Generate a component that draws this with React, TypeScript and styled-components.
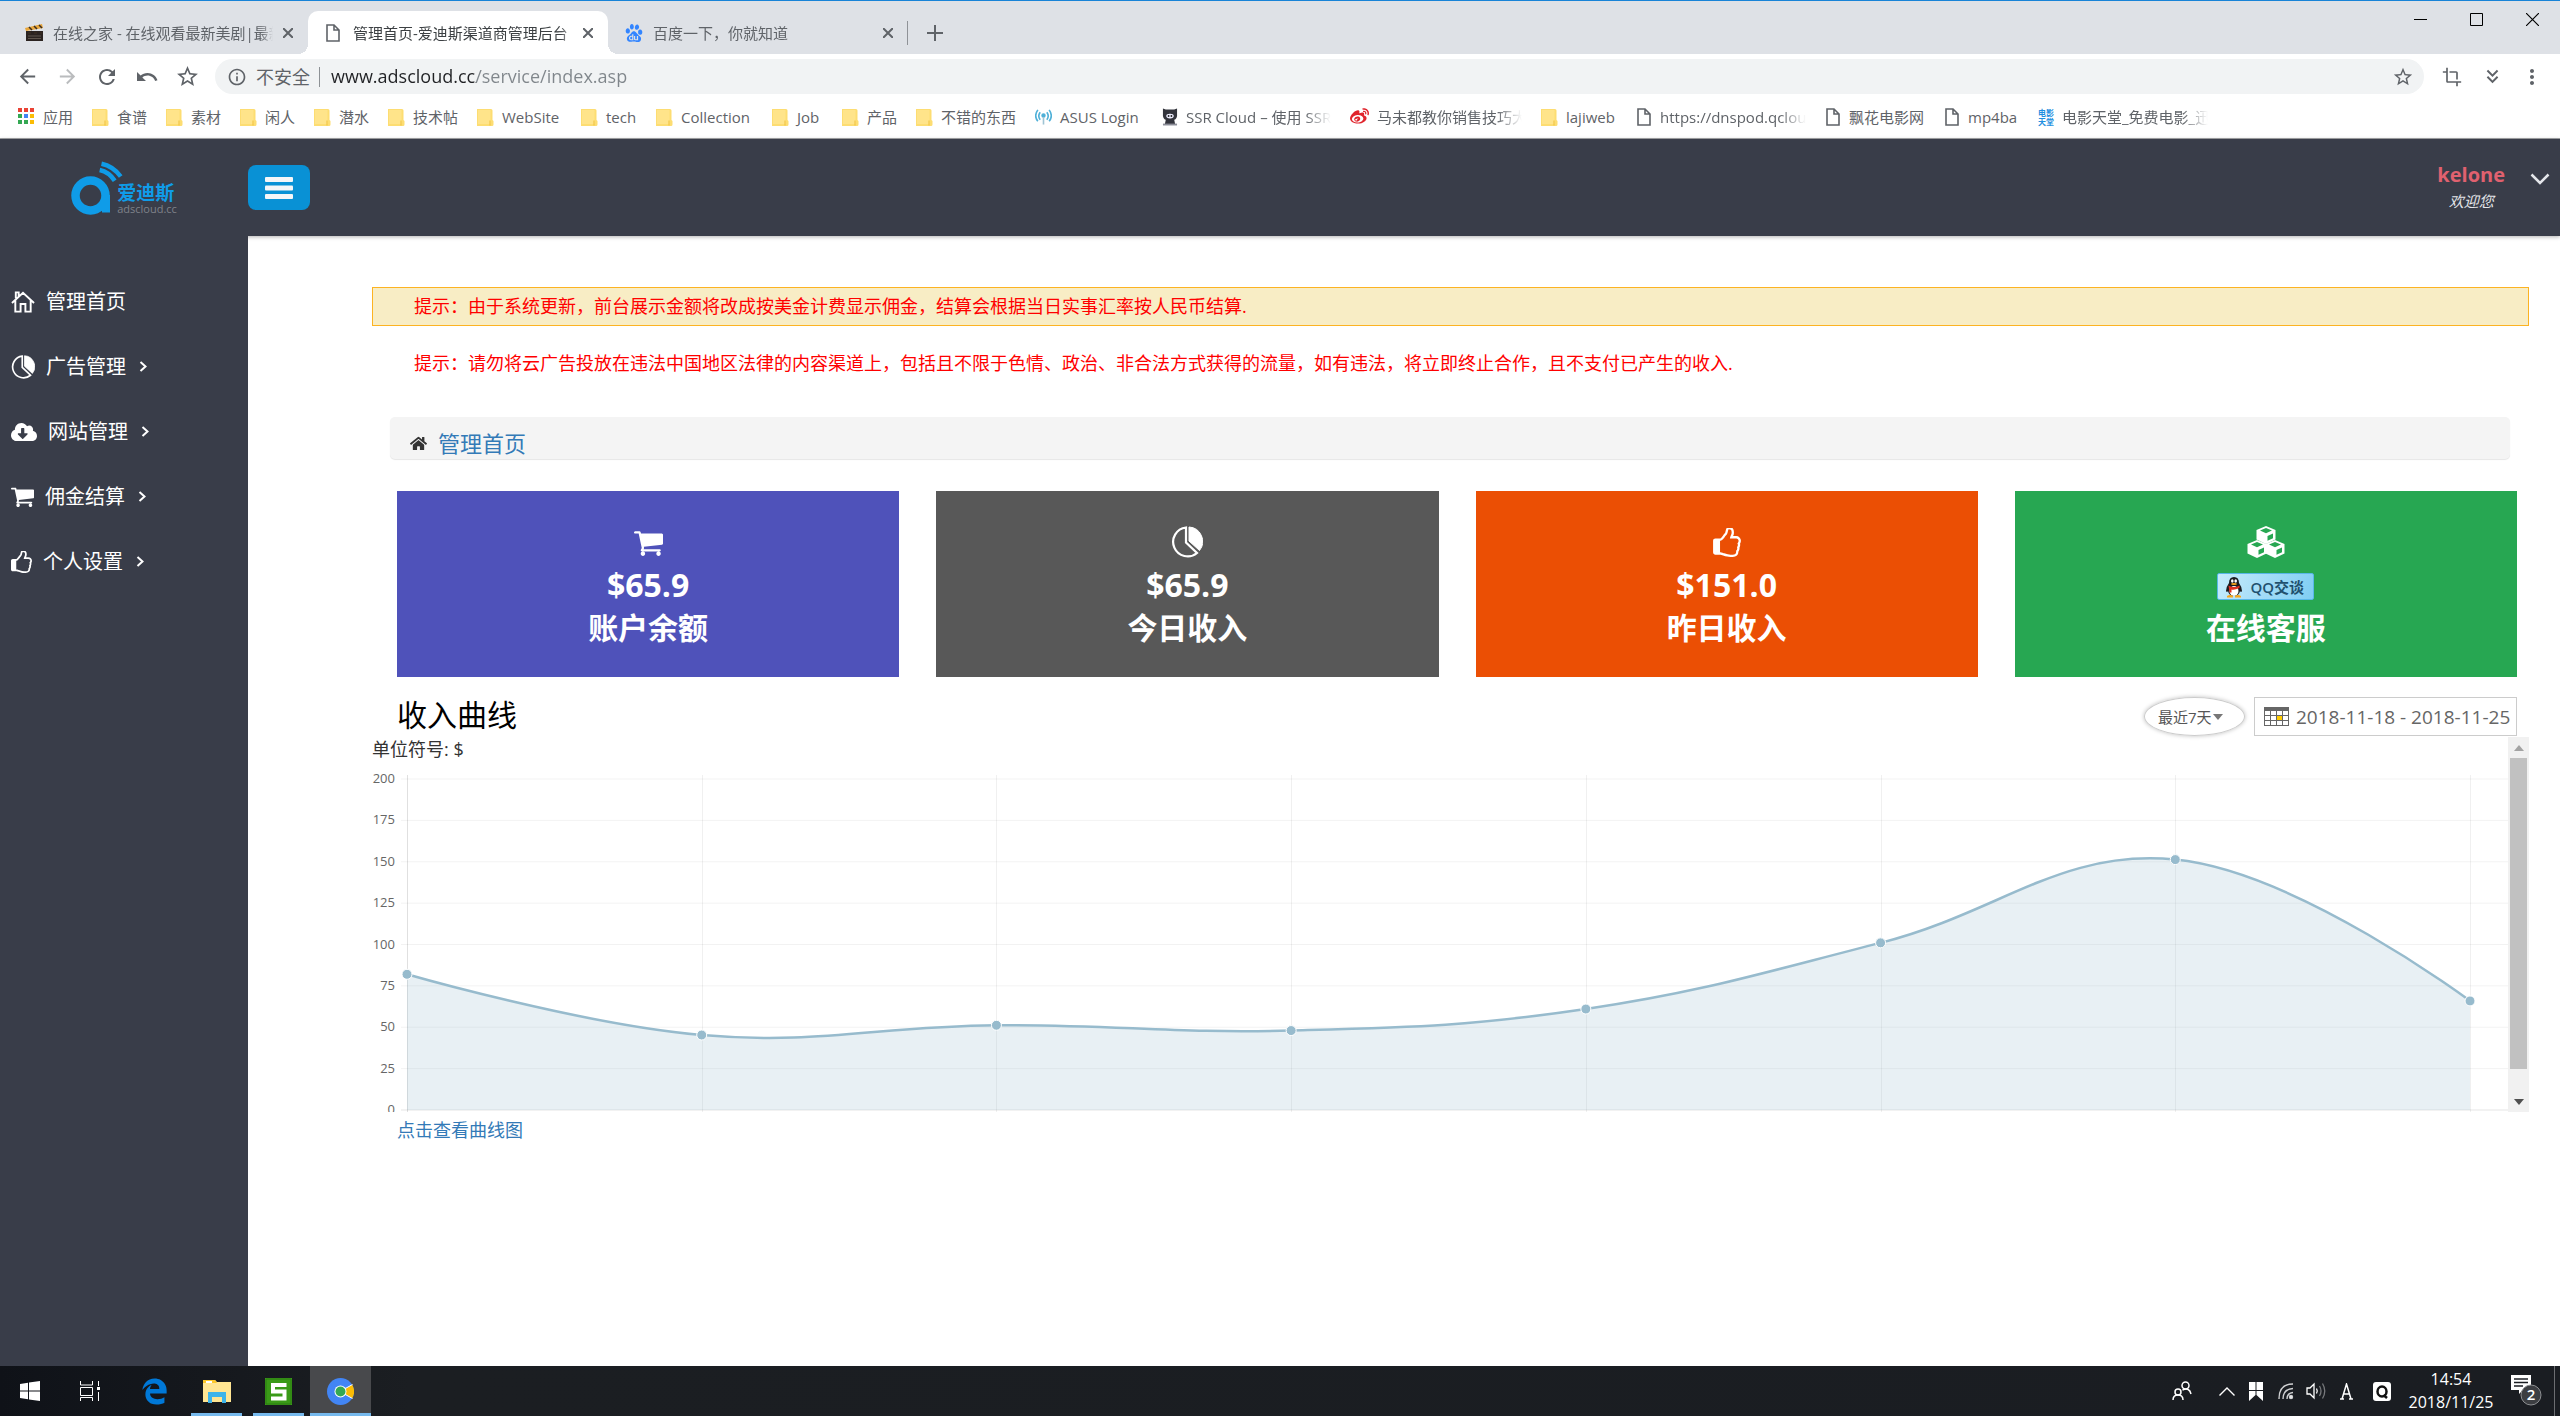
import React, { useLayoutEffect, useRef, useState } from 'react';
import styled, { createGlobalStyle, css } from 'styled-components';
import {
  MdArrowBack,
  MdArrowForward,
  MdRefresh,
  MdUndo,
  MdStarBorder,
  MdInfoOutline,
  MdCrop,
  MdMoreVert,
  MdKeyboardDoubleArrowDown,
} from 'react-icons/md';
import { FaCloudDownloadAlt, FaHome, FaWeibo, FaEdgeLegacy } from 'react-icons/fa';
import { SiBaidu } from 'react-icons/si';

const ink = '#393d49';
const link = '#337ab7';

const GlobalStyle = createGlobalStyle`
  *, *::before, *::after { box-sizing: border-box; }
  body {
    margin: 0;
    background: #fff;
    color: #333;
    font-family: "Open Sans", "Noto Sans CJK SC", sans-serif;
    font-size: 18px;
  }
  button, input, select { font-family: inherit; color: inherit; }
  button { border: 0; background: none; padding: 0; cursor: pointer; }
  a { color: inherit; text-decoration: none; }
  svg { display: block; flex: none; }
  h1, h2, p, ul { margin: 0; padding: 0; font-weight: normal; }
  ul { list-style: none; }
`;

const Screen = styled.div`
  display: flex;
  flex-direction: column;
  min-height: 100vh;
`;

/* ---------- browser frame ---------- */

const TabStrip = styled.div`
  display: flex;
  align-items: flex-end;
  height: 54px;
  padding-left: 8px;
  border-top: 1px solid #1883d7;
  background: #dee1e6;
`;

const Tab = styled.div<{ $active?: boolean; $rule?: boolean }>`
  position: relative;
  display: flex;
  align-items: center;
  width: 300px;
  height: 43px;
  padding: 0 10px 0 17px;
  border-radius: 10px 10px 0 0;
  color: ${(p) => (p.$active ? '#3c4043' : '#5f6368')};
  ${(p) =>
    p.$active &&
    css`
      background: #fff;
      &::before,
      &::after {
        content: '';
        position: absolute;
        bottom: 0;
        width: 10px;
        height: 10px;
      }
      &::before {
        left: -10px;
        background: radial-gradient(circle at 0 0, transparent 10px, #fff 10px);
      }
      &::after {
        right: -10px;
        background: radial-gradient(circle at 100% 0, transparent 10px, #fff 10px);
      }
    `}
  ${(p) =>
    p.$rule &&
    css`
      &::after {
        content: '';
        position: absolute;
        right: 0;
        top: 10px;
        height: 24px;
        border-right: 1px solid #8f9297;
      }
    `}
`;

const TabIcon = styled.span`
  display: flex;
  width: 28px;
`;

const TabTitle = styled.span`
  flex: 1;
  overflow: hidden;
  margin-right: 5px;
  font-size: 15px;
  line-height: 24px;
  white-space: nowrap;
  mask-image: linear-gradient(to left, transparent, #000 12px);
`;

const TabClose = styled.button`
  display: grid;
  place-items: center;
  width: 20px;
  height: 20px;
  color: #5f6368;
`;

const NewTab = styled.button`
  display: grid;
  place-items: center;
  width: 54px;
  height: 43px;
  color: #5f6368;
`;

const WindowButtons = styled.div`
  display: flex;
  align-self: flex-start;
  margin-left: auto;
`;

const WindowButton = styled.button`
  display: grid;
  place-items: center;
  width: 56px;
  height: 36px;
  color: #000;
`;

const Toolbar = styled.div`
  display: flex;
  align-items: center;
  height: 45px;
  padding: 0 8px 0 7px;
  background: #fff;
`;

const ToolButton = styled.button<{ $faded?: boolean }>`
  display: grid;
  place-items: center;
  width: 40px;
  height: 36px;
  color: ${(p) => (p.$faded ? '#babcbe' : '#5f6368')};
`;

const Omnibox = styled.div`
  display: flex;
  flex: 1;
  align-items: center;
  height: 35px;
  margin: 0 8px;
  padding: 0 10px 0 12px;
  border-radius: 18px;
  background: #f1f3f4;
  color: #5f6368;
`;

const Insecure = styled.span`
  margin-left: 9px;
  padding-right: 9px;
  border-right: 1px solid #8d9195;
  font-size: 18px;
  line-height: 20px;
`;

const Address = styled.input`
  flex: 1;
  min-width: 0;
  padding: 0 0 2px;
  margin-left: 11px;
  border: 0;
  outline: 0;
  background: linear-gradient(to right, #202124 145px, #80868b 145px);
  background-clip: text;
  -webkit-text-fill-color: transparent;
  font-size: 18px;
  line-height: 28px;
`;

const Bookmarks = styled.nav`
  display: flex;
  align-items: center;
  gap: 19px;
  height: 40px;
  padding: 0 18px 4px;
  overflow: hidden;
  border-bottom: 1px solid #a5a6a8;
  background: #fff;
  color: #5f6368;
  font-size: 15px;
`;

const Bookmark = styled.a`
  display: flex;
  align-items: center;
  gap: 8px;
`;

const BookmarkText = styled.span<{ $width: number; $fade?: boolean }>`
  width: ${(p) => p.$width}px;
  line-height: 24px;
  white-space: nowrap;
  ${(p) =>
    p.$fade &&
    css`
      overflow: hidden;
      mask-image: linear-gradient(to left, transparent, #000 26px);
    `}
`;

/* ---------- site ---------- */

const Site = styled.div`
  display: flex;
  flex: 1;
  flex-direction: column;
`;

const Header = styled.header`
  position: relative;
  display: flex;
  align-items: center;
  height: 97px;
  background: ${ink};
  box-shadow: 0 1px 4px rgba(0, 0, 0, 0.3);
`;

const Brand = styled.a`
  display: flex;
  justify-content: center;
  width: 248px;
`;

const MenuButton = styled.button`
  display: grid;
  place-items: center;
  width: 62px;
  height: 45px;
  border-radius: 8px;
  background: #0991d5;
  color: #f4f6f8;
`;

const Account = styled.button`
  display: flex;
  align-items: flex-start;
  gap: 25px;
  margin-left: auto;
  padding-right: 10px;
  color: #e4e6ea;
`;

const AccountText = styled.span`
  display: flex;
  flex-direction: column;
  align-items: center;
`;

const AccountName = styled.strong`
  color: #e0616f;
  font-size: 20px;
  line-height: 26px;
`;

const Welcome = styled.em`
  font-size: 15px;
  line-height: 26px;
`;

const Chevron = styled.span`
  padding-top: 11px;
`;

const Body = styled.div`
  display: flex;
  flex: 1;
`;

const Sidebar = styled.nav`
  position: relative;
  width: 248px;
  padding-top: 33px;
  background: ${ink};
  color: #fff;
`;

const MenuLink = styled.a`
  display: flex;
  align-items: center;
  height: 65px;
  padding-left: 11px;
  font-size: 20px;
`;

const MenuText = styled.span`
  margin: 0 13px 0 11px;
  line-height: 30px;
`;

const Main = styled.main`
  flex: 1;
  min-width: 0;
  padding: 51px 31px 40px 124px;
`;

const Notice = styled.p<{ $boxed?: boolean }>`
  padding: 6px 41px;
  border: 1px solid ${(p) => (p.$boxed ? '#fcb322' : 'transparent')};
  background: ${(p) => (p.$boxed ? '#f8edc5' : 'transparent')};
  color: #f00;
  font-size: 18px;
  line-height: 25px;
  & + & {
    margin-top: 18px;
  }
`;

const Breadcrumb = styled.div`
  display: flex;
  align-items: center;
  gap: 11px;
  margin: 34px 19px 32px 18px;
  padding: 11px 20px 1px;
  border-radius: 5px;
  background: #f4f4f4;
  box-shadow: 0 1px 1px rgba(0, 0, 0, 0.1);
  font-size: 22px;
  line-height: 30px;
  a {
    color: ${link};
  }
`;

const Content = styled.section`
  padding: 0 12px 0 25px;
`;

const Cards = styled.div`
  display: grid;
  grid-template-columns: repeat(4, 1fr);
  gap: 37px;
`;

const Card = styled.div<{ $color: string }>`
  padding: 30px 0 28px;
  background: ${(p) => p.$color};
  color: #fff;
`;

const CardIcon = styled.div`
  display: grid;
  place-items: center;
  height: 42px;
`;

const CardLine = styled.div<{ $size: number }>`
  display: flex;
  align-items: center;
  justify-content: center;
  height: 43px;
  font-size: ${(p) => p.$size}px;
  font-weight: bold;
  line-height: 43px;
`;

const QQButton = styled.a`
  display: flex;
  align-items: center;
  gap: 6px;
  width: 97px;
  height: 27px;
  margin-top: 4px;
  padding-left: 6px;
  border: 1px solid #58b7e8;
  border-radius: 2px;
  background: linear-gradient(110deg, #c6ebfb, #7fcdf3);
  color: #21506e;
  font-size: 15px;
  font-weight: 600;
  line-height: 24px;
`;

const ChartHead = styled.div`
  display: flex;
  align-items: flex-start;
  padding-top: 20px;
  height: 60px;
`;

const Title = styled.h2`
  flex: 1;
  color: #000;
  font-size: 30px;
  line-height: 36px;
`;

const RangePill = styled.label`
  display: flex;
  align-items: center;
  gap: 1px;
  width: 101px;
  height: 39px;
  margin-right: 9px;
  padding-left: 13px;
  border: 1px solid #ccc;
  border-radius: 50%;
  box-shadow: 0 0 4px rgba(0, 0, 0, 0.25);
  color: #555;
`;

const RangeSelect = styled.select`
  appearance: none;
  padding: 0;
  border: 0;
  outline: 0;
  background: none;
  font-size: 15px;
  line-height: 24px;
`;

const DateBox = styled.label`
  display: flex;
  align-items: center;
  gap: 7px;
  width: 263px;
  height: 39px;
  padding: 0 3px 0 9px;
  border: 1px solid #ccc;
  color: #666;
`;

const DateInput = styled.input`
  flex: 1;
  min-width: 0;
  padding: 0;
  border: 0;
  outline: 0;
  background: none;
  font-size: 19px;
`;

const ScrollPanel = styled.div`
  display: flex;
  height: 375px;
`;

const ScrollView = styled.div`
  flex: 1;
  min-width: 0;
  overflow: hidden;
`;

const Unit = styled.p`
  line-height: 25px;
`;

const ScrollTrack = styled.div`
  display: flex;
  flex-direction: column;
  width: 21px;
  background: #f1f1f1;
`;

const ScrollArrow = styled.button`
  display: grid;
  place-items: center;
  height: 21px;
`;

const ScrollThumb = styled.div`
  height: 311px;
  margin: 0 2px auto;
  background: #c1c1c1;
`;

const CurveLink = styled.a`
  display: inline-block;
  margin: 6px 0 0 25px;
  color: ${link};
  line-height: 25px;
`;

/* ---------- taskbar ---------- */

const Taskbar = styled.footer`
  position: relative;
  display: flex;
  height: 50px;
  background: linear-gradient(to right, #0f1218, #1b1e22 16%, #1a1d22);
  color: #fff;
`;

const TaskButton = styled.button<{ $width: number; $gap?: number; $open?: boolean; $active?: boolean }>`
  display: grid;
  place-items: center;
  width: ${(p) => p.$width}px;
  margin-right: ${(p) => p.$gap ?? 0}px;
  border-bottom: 3px solid ${(p) => (p.$open || p.$active ? '#76b9ed' : 'transparent')};
  padding-top: 3px;
  background: ${(p) => (p.$active ? '#48494c' : 'transparent')};
  background-clip: padding-box;
`;

const Tray = styled.div`
  display: flex;
  align-items: center;
  margin-left: auto;
`;

const TrayButton = styled.button<{ $width: number }>`
  display: grid;
  place-items: center;
  width: ${(p) => p.$width}px;
  height: 50px;
  color: #fff;
`;

const Clock = styled.div`
  width: 96px;
  font-size: 16px;
  line-height: 23px;
  text-align: center;
`;

const ShowDesktop = styled.div`
  width: 6px;
  height: 50px;
  border-left: 1px solid #6c6e72;
`;

/* ---------- drawings ---------- */

const Folder = () => (
  <svg width="17" height="18" viewBox="0 0 17 18">
    <path d="M0 1h14q1.500 0 1.500 1.500V12l1 1v3.500q0 1.500-1.500 1.500H0z" fill="#fddd72" />
    <path d="M1 2h12.500v14H1z" fill="#ffe48a" />
    <path d="M13 12.500v5" stroke="#efc13c" />
  </svg>
);

const Page = () => (
  <svg width="16" height="18" viewBox="0 0 16 18" fill="none" stroke="#5f6368" strokeWidth="1.600">
    <path d="M2 1h7l5 5v11H2zM9 1v5h5" />
  </svg>
);

const AppsGrid = () => (
  <svg width="17" height="17" viewBox="0 0 17 17">
    {['#ea4335', '#ea4335', '#ea4335', '#34a853', '#4285f4', '#fbbc05', '#34a853', '#34a853', '#fbbc05'].map((c, i) => (
      <rect key={i} x={(i % 3) * 6} y={Math.floor(i / 3) * 6} width="4" height="4" fill={c} />
    ))}
  </svg>
);

const Clapper = () => (
  <svg width="19" height="18" viewBox="0 0 19 18">
    <path d="M1 7h17v10H1z" fill="#2b2320" />
    <path d="M0 4L17 0l1 4L1 7z" fill="#e9a63a" />
    <path d="M4 3l3 3M9 2l3 3M14 1l3 3M3 9h3M9 9h3M15 9h2" stroke="#3a2d20" strokeWidth="1.500" />
    <path d="M3 12h13M3 14.500h13" stroke="#6d6258" strokeWidth="0.800" />
  </svg>
);

const Antenna = () => (
  <svg width="17" height="18" viewBox="0 0 18 18" fill="none" stroke="#4fb0d8" strokeWidth="1.700">
    <path d="M5.500 4q-3 4 0 8M12.500 4q3 4 0 8M3 1.500q-4.500 6.500 0 12M15 1.500q4.500 6.500 0 12" />
    <circle cx="9" cy="7.500" r="1.500" fill="#4fb0d8" />
    <path d="M9 9v8" stroke="#9fc4d4" />
  </svg>
);

const Cat = () => (
  <svg width="16" height="18" viewBox="0 0 17 18">
    <path d="M1 0l3 1h9l3-1v8q-1 4-3 4l1 5H3l1-5Q2 12 1 8z" fill="#33343c" />
    <ellipse cx="8.500" cy="8" rx="4" ry="2.500" fill="#eef" />
    <circle cx="7" cy="8" r="1" fill="#222" />
    <circle cx="10" cy="8" r="1" fill="#222" />
    <path d="M1 17h15" stroke="#8b8d98" strokeWidth="2" />
  </svg>
);

const MovieMark = styled.span`
  flex: none;
  width: 16px;
  color: #1f8fe0;
  font-size: 8px;
  font-weight: bold;
  line-height: 9px;
`;

const Cross = ({ size = 10, width = 2 }: { size?: number; width?: number }) => (
  <svg width={size} height={size} viewBox="0 0 10 10" stroke="currentColor" strokeWidth={width}>
    <path d="M0 0l10 10M10 0L0 10" />
  </svg>
);

const LogoBox = styled.span`
  display: grid;
  grid-template-columns: 46px auto;
  grid-template-rows: 23px 19px 12px;
  color: #0f9ce8;
`;

const LogoMark = styled.svg`
  grid-row: 1 / 4;
`;

const LogoName = styled.span`
  grid-area: 2 / 2;
  font-size: 19px;
  font-weight: 600;
  line-height: 19px;
`;

const LogoDomain = styled.span`
  grid-area: 3 / 2;
  color: #7f828a;
  font-size: 11px;
  line-height: 12px;
`;

const Logo = () => (
  <LogoBox>
    <LogoMark width="54" height="54" viewBox="0 0 54 54">
      <circle cx="19.500" cy="34.500" r="15" fill="none" stroke="#0f9ce8" strokeWidth="8.500" />
      <path d="M31 34h8v17.500h-8z" fill="#0f9ce8" />
      <path d="M30.500 2.700Q42 5 49.700 15.500M28.700 9Q38 11 43.700 19.700" fill="none" stroke="#0f9ce8" strokeWidth="4.500" />
    </LogoMark>
    <LogoName>爱迪斯</LogoName>
    <LogoDomain>adscloud.cc</LogoDomain>
  </LogoBox>
);

const HouseOutline = () => (
  <svg width="24" height="22" viewBox="0 0 25 22" fill="none" stroke="#fff" strokeWidth="2">
    <path d="M1 12L12.500 1.500 24 12M4.500 9v12h5.500v-8h5v8h5.500V9M5 7V1h3v4" />
  </svg>
);

const Pie = ({ size = 24 }: { size?: number }) => (
  <svg width={size} height={size} viewBox="0 0 32 32" fill="none" stroke="#fff">
    <path d="M15 1.500A14.500 14.500 0 1 0 26 27L15 16.500z" strokeWidth="2.200" />
    <path d="M18 1A14.500 14.500 0 0 1 28.500 24.500L18 15z" fill="#fff" />
  </svg>
);

const Cart = ({ width = 23 }: { width?: number }) => (
  <svg width={width} height={width} viewBox="0 128 1664 1536" fill="#fff">
    <path d="M640 1536q0 52-38 90t-90 38-90-38-38-90 38-90 90-38 90 38 38 90zM1536 1536q0 52-38 90t-90 38-90-38-38-90 38-90 90-38 90 38 38 90zM1664 448v512q0 24-16.500 42.500t-40.500 21.500l-1044 122q13 60 13 70 0 16-24 64h920q26 0 45 19t19 45-19 45-45 19h-1024q-26 0-45-19t-19-45q0-11 8-31.500t16-36 21.500-40 15.500-29.500l-177-823h-204q-26 0-45-19t-19-45 19-45 45-19h256q16 0 28.500 6.500t19.500 15.500 13 24.500 8 26 5.500 29.500 4.500 26h1201q26 0 45 19t19 45z" />
  </svg>
);

const Thumb = ({ width = 21 }: { width?: number }) => (
  <svg width={width} height={Math.round(width * 1.05)} viewBox="0 64 1536 1600" fill="#fff">
    <path d="M256 1344q0 26-19 45t-45 19-45-19-19-45 19-45 45-19 45 19 19 45zm1152-576q0-51-39-89.500t-89-38.500h-352q0-58 48-159.500t48-160.500q0-98-32-145t-128-47q-26 26-38 85t-30.500 125.500-59.500 109.500q-22 23-77 91-4 5-23 30t-31.500 41-34.500 42.500-40 44-38.500 35.500-40 27-35.500 9h-32v640h32q13 0 31.500 3t33 6.500 38 11 35 11.500 35.500 12.500 29 10.500q211 73 342 73h121q192 0 192-167 0-26-5-56 30-16 47.500-52.500t17.500-73.500-18-69q53-50 53-119 0-25-10-55.500t-25-47.500q32-1 53.500-47t21.500-81zm128-1q0 89-49 163 9 33 9 69 0 77-38 144 3 21 3 43 0 101-60 178 1 139-85 219.500t-227 80.500h-129q-96 0-189.500-22.500t-216.500-65.500q-116-40-138-40h-288q-53 0-90.500-37.500t-37.500-90.500v-640q0-53 37.500-90.500t90.500-37.500h274q36-24 137-155 58-75 107-128 24-25 35.500-85.500t30.500-126.500 62-108q39-37 90-37 84 0 151 32.500t102 101.500 35 186q0 93-48 192h176q104 0 180 76t76 179z" />
  </svg>
);

const Cubes = () => (
  <svg width="38" height="32" viewBox="0 0 38 32">
    {[
      [19, 0],
      [10, 14],
      [28, 14],
    ].map(([x, y]) => (
      <g key={x} transform={`translate(${x} ${y})`}>
        <path d="M0 0l9.500 4v9.500L0 18l-9.500-4.500V4z" fill="#fff" />
        <path d="M0 2l6 2.600L0 7.200l-6-2.600zM1.500 10L7 7.600v4.600l-5.500 2.600z" fill="#27a752" />
      </g>
    ))}
  </svg>
);

const Penguin = () => (
  <svg width="20" height="22" viewBox="0 0 20 22">
    <path d="M10 1q5 0 5 6 3 4 3 8-1 2-2 0-1 5-6 5t-6-5q-1 2-2 0 0-4 3-8 0-6 5-6z" fill="#1b1b1f" />
    <ellipse cx="10" cy="15" rx="4.500" ry="5" fill="#fff" />
    <ellipse cx="8.300" cy="5" rx="1.300" ry="1.800" fill="#fff" />
    <ellipse cx="11.700" cy="5" rx="1.300" ry="1.800" fill="#fff" />
    <ellipse cx="10" cy="8" rx="3" ry="1" fill="#f7a61b" />
    <path d="M4.500 9.500q5.500 3 11 0v2.500q-5.500 2.500-8 1.500v3H5.500z" fill="#e0301e" />
    <path d="M3 20q3-2 6 0v1.500H3zM11 20q3-2 6 0v1.500h-6z" fill="#f7a61b" />
  </svg>
);

const Calendar = () => (
  <svg width="25" height="19" viewBox="0 0 25 19">
    <path d="M0 0h25v19H0z" fill="#666" />
    {[0, 1, 2].map((r) =>
      [0, 1, 2, 3].map((c) => (
        <rect key={`${r}${c}`} x={1 + c * 6} y={4 + r * 5} width="5" height="4" fill={r === 1 && c === 2 ? '#fc0' : '#fff'} />
      )),
    )}
  </svg>
);

const Caret = ({ up, color }: { up?: boolean; color: string }) => (
  <svg width="10" height="6" viewBox="0 0 10 6" fill={color}>
    <path d={up ? 'M0 6l5-6 5 6z' : 'M0 0h10L5 6z'} />
  </svg>
);

const MenuArrow = () => (
  <svg width="8" height="11" viewBox="0 0 8 11" fill="none" stroke="#fff" strokeWidth="2">
    <path d="M1.500 1l5 4.500-5 4.500" />
  </svg>
);

/* ---------- income chart ---------- */

type Pt = { x: number; y: number };

const incomes = [82, 45.3, 51.2, 48, 61, 101, 151.3, 65.9];
const ticks = [200, 175, 150, 125, 100, 75, 50, 25, 0];
const top = 17;
const bottom = 348;
const left = 35;
const right = 38;

function handles(prev: Pt, p: Pt, next: Pt) {
  const a = Math.hypot(p.x - prev.x, p.y - prev.y);
  const b = Math.hypot(next.x - p.x, next.y - p.y);
  const fa = (0.4 * a) / (a + b);
  const fb = (0.4 * b) / (a + b);
  const dx = next.x - prev.x;
  const dy = next.y - prev.y;
  return { in: { x: p.x - fa * dx, y: p.y - fa * dy }, out: { x: p.x + fb * dx, y: p.y + fb * dy } };
}

function IncomeChart() {
  const box = useRef<HTMLDivElement>(null);
  const [width, setWidth] = useState(2136);
  useLayoutEffect(() => {
    const el = box.current;
    if (!el) return;
    const measure = () => setWidth(el.clientWidth);
    measure();
    const watcher = new ResizeObserver(measure);
    watcher.observe(el);
    return () => watcher.disconnect();
  }, []);

  const step = (width - left - right) / (incomes.length - 1);
  const yOf = (v: number) => bottom - ((bottom - top) * v) / 200;
  const pts = incomes.map((v, i) => ({ x: left + i * step, y: yOf(v) }));
  const ctl = pts.map((p, i) =>
    i === 0 || i === pts.length - 1 ? { in: p, out: p } : handles(pts[i - 1], p, pts[i + 1]),
  );
  const curve = pts
    .map((p, i) =>
      i === 0 ? `M${p.x} ${p.y}` : `C${ctl[i - 1].out.x} ${ctl[i - 1].out.y} ${ctl[i].in.x} ${ctl[i].in.y} ${p.x} ${p.y}`,
    )
    .join('');
  const last = pts[pts.length - 1];

  return (
    <div ref={box}>
      <svg width={width} height="390" role="img" aria-label="收入曲线">
        {ticks.map((t) => (
          <g key={t}>
            <path d={`M${left - 6} ${yOf(t)}H${width}`} stroke={t ? 'rgba(0,0,0,.05)' : 'rgba(0,0,0,.1)'} />
            <text x="23" y={yOf(t) + 4} textAnchor="end" fontSize="13" fill="#666">
              {t}
            </text>
          </g>
        ))}
        {pts.map((p, i) => (
          <path
            key={i}
            d={`M${Math.round(p.x) + 0.5} ${top - 4}V${bottom + 6}`}
            stroke={i ? 'rgba(0,0,0,.06)' : 'rgba(0,0,0,.12)'}
          />
        ))}
        <path d={`${curve}L${last.x} ${bottom}H${left}Z`} fill="rgba(151,187,205,.22)" />
        <path d={curve} fill="none" stroke="#97bbcd" strokeWidth="2.500" />
        {pts.map((p, i) => (
          <circle key={i} cx={p.x} cy={p.y} r="5" fill="#97bbcd" stroke="#fff" />
        ))}
      </svg>
    </div>
  );
}

/* ---------- data ---------- */

const bookmarks: { text: string; width: number; icon: React.ReactNode; fade?: boolean }[] = [
  { text: '应用', width: 30, icon: <AppsGrid /> },
  { text: '食谱', width: 30, icon: <Folder /> },
  { text: '素材', width: 30, icon: <Folder /> },
  { text: '闲人', width: 30, icon: <Folder /> },
  { text: '潜水', width: 30, icon: <Folder /> },
  { text: '技术帖', width: 45, icon: <Folder /> },
  { text: 'WebSite', width: 60, icon: <Folder /> },
  { text: 'tech', width: 31, icon: <Folder /> },
  { text: 'Collection', width: 72, icon: <Folder /> },
  { text: 'Job', width: 26, icon: <Folder /> },
  { text: '产品', width: 30, icon: <Folder /> },
  { text: '不错的东西', width: 75, icon: <Folder /> },
  { text: 'ASUS Login', width: 83, icon: <Antenna /> },
  { text: 'SSR Cloud – 使用 SSR', width: 145, icon: <Cat />, fade: true },
  { text: '马未都教你销售技巧大全', width: 145, icon: <FaWeibo size={19} color="#e0242c" />, fade: true },
  { text: 'lajiweb', width: 51, icon: <Folder /> },
  { text: 'https://dnspod.qcloud.com', width: 146, icon: <Page />, fade: true },
  { text: '飘花电影网', width: 76, icon: <Page /> },
  { text: 'mp4ba', width: 51, icon: <Page /> },
  { text: '电影天堂_免费电影_迅雷下载', width: 146, icon: <MovieMark>电影天堂</MovieMark>, fade: true },
];

const menu = [
  { text: '管理首页', icon: <HouseOutline /> },
  { text: '广告管理', icon: <Pie />, more: true },
  { text: '网站管理', icon: <FaCloudDownloadAlt size={26} />, more: true },
  { text: '佣金结算', icon: <Cart />, more: true },
  { text: '个人设置', icon: <Thumb />, more: true },
];

const cards = [
  { color: '#4f52ba', icon: <Cart width={29} />, value: '$65.9', label: '账户余额' },
  { color: '#585858', icon: <Pie size={32} />, value: '$65.9', label: '今日收入' },
  { color: '#eb4f04', icon: <Thumb width={28} />, value: '$151.0', label: '昨日收入' },
  {
    color: '#27a752',
    icon: <Cubes />,
    value: (
      <QQButton href="#qq">
        <Penguin />
        QQ交谈
      </QQButton>
    ),
    label: '在线客服',
  },
];

export default function App() {
  return (
    <Screen>
      <GlobalStyle />
      <TabStrip>
        <Tab>
          <TabIcon><Clapper /></TabIcon>
          <TabTitle>在线之家 - 在线观看最新美剧|最新电影</TabTitle>
          <TabClose aria-label="关闭"><Cross /></TabClose>
        </Tab>
        <Tab $active>
          <TabIcon><Page /></TabIcon>
          <TabTitle>管理首页-爱迪斯渠道商管理后台</TabTitle>
          <TabClose aria-label="关闭"><Cross /></TabClose>
        </Tab>
        <Tab $rule>
          <TabIcon><SiBaidu size={18} color="#3385ff" /></TabIcon>
          <TabTitle>百度一下，你就知道</TabTitle>
          <TabClose aria-label="关闭"><Cross /></TabClose>
        </Tab>
        <NewTab aria-label="新标签页">
          <svg width="16" height="16" viewBox="0 0 16 16" stroke="currentColor" strokeWidth="2">
            <path d="M8 0v16M0 8h16" />
          </svg>
        </NewTab>
        <WindowButtons>
          <WindowButton aria-label="最小化">
            <svg width="13" height="13" viewBox="0 0 13 13" stroke="currentColor"><path d="M0 6.500h13" /></svg>
          </WindowButton>
          <WindowButton aria-label="最大化">
            <svg width="13" height="13" viewBox="0 0 13 13" stroke="currentColor" fill="none"><path d="M.5.500h12v12H.5z" /></svg>
          </WindowButton>
          <WindowButton aria-label="关闭窗口"><Cross size={13} width={0.9} /></WindowButton>
        </WindowButtons>
      </TabStrip>

      <Toolbar>
        <ToolButton aria-label="后退"><MdArrowBack size={23} /></ToolButton>
        <ToolButton aria-label="前进" $faded><MdArrowForward size={23} /></ToolButton>
        <ToolButton aria-label="刷新"><MdRefresh size={24} /></ToolButton>
        <ToolButton aria-label="撤销"><MdUndo size={24} /></ToolButton>
        <ToolButton aria-label="收藏"><MdStarBorder size={25} /></ToolButton>
        <Omnibox>
          <MdInfoOutline size={20} />
          <Insecure>不安全</Insecure>
          <Address aria-label="地址" defaultValue="www.adscloud.cc/service/index.asp" />
          <MdStarBorder size={22} />
        </Omnibox>
        <ToolButton aria-label="截图"><MdCrop size={20} /></ToolButton>
        <ToolButton aria-label="更多扩展"><MdKeyboardDoubleArrowDown size={23} /></ToolButton>
        <ToolButton aria-label="菜单"><MdMoreVert size={24} /></ToolButton>
      </Toolbar>

      <Bookmarks aria-label="书签">
        {bookmarks.map((b) => (
          <Bookmark key={b.text} href="#bookmark">
            {b.icon}
            <BookmarkText $width={b.width} $fade={b.fade}>{b.text}</BookmarkText>
          </Bookmark>
        ))}
      </Bookmarks>

      <Site>
        <Header>
          <Brand href="#home" aria-label="爱迪斯"><Logo /></Brand>
          <MenuButton aria-label="菜单">
            <svg width="28" height="22" viewBox="0 0 28 22" fill="currentColor">
              <rect width="28" height="5" rx="1" />
              <rect y="8.500" width="28" height="5" rx="1" />
              <rect y="17" width="28" height="5" rx="1" />
            </svg>
          </MenuButton>
          <Account>
            <AccountText>
              <AccountName>kelone</AccountName>
              <Welcome>欢迎您</Welcome>
            </AccountText>
            <Chevron>
              <svg width="20" height="12" viewBox="0 0 20 12" fill="none" stroke="currentColor" strokeWidth="2.500">
                <path d="M1.500 1.500L10 10l8.500-8.500" />
              </svg>
            </Chevron>
          </Account>
        </Header>

        <Body>
          <Sidebar>
            <ul>
              {menu.map((m) => (
                <li key={m.text}>
                  <MenuLink href="#menu">
                    {m.icon}
                    <MenuText>{m.text}</MenuText>
                    {m.more && <MenuArrow />}
                  </MenuLink>
                </li>
              ))}
            </ul>
          </Sidebar>

          <Main>
            <Notice $boxed>
              提示：由于系统更新，前台展示金额将改成按美金计费显示佣金，结算会根据当日实事汇率按人民币结算.
            </Notice>
            <Notice>
              提示：请勿将云广告投放在违法中国地区法律的内容渠道上，包括且不限于色情、政治、非合法方式获得的流量，如有违法，将立即终止合作，且不支付已产生的收入.
            </Notice>
            <Breadcrumb>
              <FaHome size={17} />
              <a href="#home">管理首页</a>
            </Breadcrumb>

            <Content>
              <Cards>
                {cards.map((c) => (
                  <Card key={c.label} $color={c.color}>
                    <CardIcon>{c.icon}</CardIcon>
                    <CardLine $size={32}>{c.value}</CardLine>
                    <CardLine $size={30}>{c.label}</CardLine>
                  </Card>
                ))}
              </Cards>
              <ChartHead>
                <Title>收入曲线</Title>
                <RangePill>
                  <RangeSelect aria-label="时间范围" defaultValue="7">
                    <option value="7">最近7天</option>
                  </RangeSelect>
                  <Caret color="#777" />
                </RangePill>
                <DateBox>
                  <Calendar />
                  <DateInput aria-label="日期" defaultValue="2018-11-18 - 2018-11-25" />
                </DateBox>
              </ChartHead>
            </Content>

            <ScrollPanel>
              <ScrollView>
                <Unit>单位符号: $</Unit>
                <IncomeChart />
              </ScrollView>
              <ScrollTrack>
                <ScrollArrow aria-label="向上滚动"><Caret up color="#a3a3a3" /></ScrollArrow>
                <ScrollThumb />
                <ScrollArrow aria-label="向下滚动"><Caret color="#505050" /></ScrollArrow>
              </ScrollTrack>
            </ScrollPanel>
            <CurveLink href="#curve">点击查看曲线图</CurveLink>
          </Main>
        </Body>
      </Site>

      <Taskbar>
        <TaskButton $width={60} aria-label="开始">
          <svg width="20" height="20" viewBox="0 0 20 20" fill="#fff">
            <path d="M0 3l8-1.200v7.700H0zM9 1.600L20 0v9.500H9zM0 10.500h8v7.700L0 17zM9 10.500h11V20L9 18.400z" />
          </svg>
        </TaskButton>
        <TaskButton $width={60} aria-label="任务视图">
          <svg width="20" height="20" viewBox="0 0 20 20" fill="none" stroke="#fff">
            <path d="M.5 0v4h12V0M.5 20v-3.500h12V20M.5 6.500h12v8H.5zM18.500 0v5M18.500 11v9" />
            <path d="M17 6h3v3h-3z" fill="#fff" stroke="none" />
          </svg>
        </TaskButton>
        <TaskButton $width={68} $gap={3} aria-label="Edge"><FaEdgeLegacy size={27} color="#0078d7" /></TaskButton>
        <TaskButton $width={51} $gap={11} $open aria-label="文件资源管理器">
          <svg width="28" height="24" viewBox="0 0 28 24">
            <path d="M0 1h12l2 2h14v20H0z" fill="#ffe592" />
            <path d="M0 1h12l2 3H0z" fill="#fcc72b" />
            <path d="M3 2h6v2H3z" fill="#fff" />
            <path d="M5 13h18v11h-4v-6H9v6H5z" fill="#3db4ea" />
          </svg>
        </TaskButton>
        <TaskButton $width={51} $gap={6} $open aria-label="表格">
          <svg width="27" height="27" viewBox="0 0 27 27">
            <rect width="27" height="27" fill="#3a9a18" />
            <path d="M1 1h25v25H1z" fill="none" stroke="#2a7d10" />
            <path d="M21.500 7H8v6.500h11.500V20.500H6" fill="none" stroke="#fff" strokeWidth="4" />
          </svg>
        </TaskButton>
        <TaskButton $width={61} $active aria-label="Chrome">
          <svg width="27" height="27" viewBox="0 0 27 27">
            <circle cx="13.500" cy="13.500" r="13.500" fill="#4285f4" />
            <path d="M13.500 13.500L25.200 6.800a13.500 13.500 0 0 1 0 13.400z" fill="#fbbc05" />
            <path d="M25.500 6.500l-9 5M25.500 20.500l-9-5" stroke="#fff" />
            <circle cx="13.500" cy="13.500" r="6" fill="#fff" />
            <circle cx="13.500" cy="13.500" r="5" fill="#34a853" />
          </svg>
        </TaskButton>
        <Tray>
          <TrayButton $width={62} aria-label="人脉">
            <svg width="20" height="20" viewBox="0 0 20 20" fill="none" stroke="#fff" strokeWidth="1.500">
              <circle cx="6" cy="11" r="3" />
              <circle cx="13.500" cy="4.500" r="3.500" />
              <path d="M1 19q0-5 5-5t5 5M10.500 9q7-3 8.500 4" />
            </svg>
          </TrayButton>
          <TrayButton $width={28} aria-label="显示隐藏的图标">
            <svg width="16" height="9" viewBox="0 0 16 9" fill="none" stroke="#fff" strokeWidth="1.400"><path d="M.5 8.500L8 1l7.500 7.500" /></svg>
          </TrayButton>
          <TrayButton $width={30} aria-label="安全">
            <svg width="14" height="19" viewBox="0 0 14 19" fill="#fff">
              <path d="M0 0h6.500v8H0zM7.500 0H14v8H7.500zM0 9h6.500v4L0 19zM7.500 9H14v10l-6.500-6z" />
            </svg>
          </TrayButton>
          <TrayButton $width={30} aria-label="网络">
            <svg width="16" height="17" viewBox="0 0 16 17" fill="none" stroke="#cfd0d2" strokeWidth="1.400">
              <path d="M1 16Q1 1 15 1M5 16Q5 6 15 5.500M9 16q0-6 6-6.500" />
              <circle cx="13" cy="14" r="1.500" fill="#fff" />
            </svg>
          </TrayButton>
          <TrayButton $width={30} aria-label="音量">
            <svg width="20" height="18" viewBox="0 0 20 18" fill="none" stroke="#fff" strokeWidth="1.300">
              <path d="M1 6h3l4-4v14l-4-4H1zM10.500 6.500q1.500 2.500 0 5" />
              <path d="M13.500 4q3 5 0 10M16.500 1.500q4.500 7.500 0 15" stroke="#77797c" />
            </svg>
          </TrayButton>
          <TrayButton $width={30} aria-label="输入法">
            <svg width="15" height="17" viewBox="0 0 15 17" fill="none" stroke="#fff" strokeWidth="1.500">
              <path d="M3 16L7.500 1 12 16M4.500 11h6M1 16h4M10 16h4" />
            </svg>
          </TrayButton>
          <TrayButton $width={42} aria-label="QQ输入法">
            <svg width="18" height="19" viewBox="0 0 18 19" fill="none">
              <rect width="18" height="19" rx="3" fill="#fff" />
              <ellipse cx="9" cy="9.500" rx="4.500" ry="5" stroke="#111" strokeWidth="2.500" />
              <path d="M10.500 13l3.500 3" stroke="#111" strokeWidth="2.500" />
            </svg>
          </TrayButton>
          <Clock>
            14:54
            <br />
            2018/11/25
          </Clock>
          <TrayButton $width={55} aria-label="通知">
            <Notifications />
          </TrayButton>
          <ShowDesktop />
        </Tray>
      </Taskbar>
    </Screen>
  );
}

function Notifications() {
  return (
    <svg width="32" height="32" viewBox="0 0 32 32">
      <path d="M0 0h20v15h-8l-4 4v-4H0z" fill="#fff" />
      <path d="M3 4h14M3 7.500h14M3 11h9" stroke="#1a1d22" strokeWidth="1.300" />
      <circle cx="20" cy="20" r="10" fill="#3c3e42" stroke="#8d8f92" />
      <text x="20" y="25" textAnchor="middle" fontSize="15" fontWeight="600" fill="#fff">
        2
      </text>
    </svg>
  );
}
